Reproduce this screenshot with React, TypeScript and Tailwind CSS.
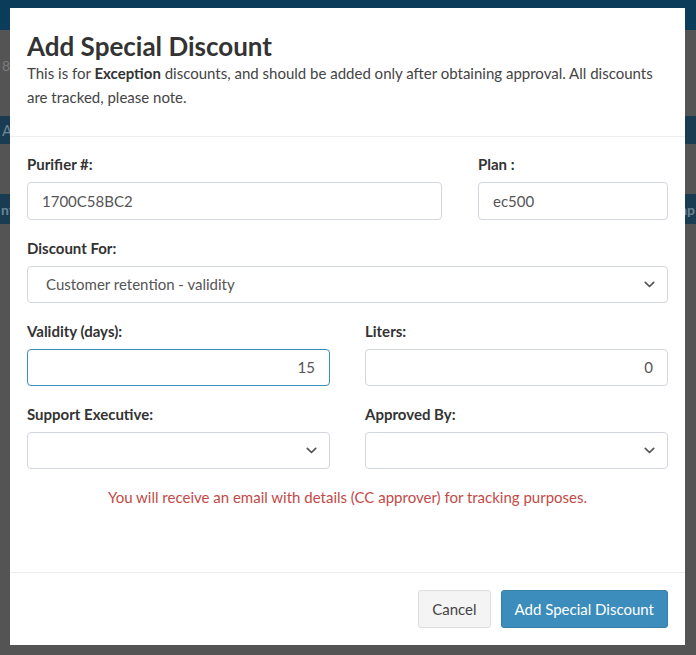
import React from "react";

const font = { fontFamily: "Lato, 'Liberation Sans', sans-serif" };

function Chevron() {
  return (
    <svg width="11" height="7" viewBox="0 0 11 7" fill="none" className="shrink-0">
      <path d="M1.3 1.3 5.5 5.5l4.2-4.2" stroke="#555" strokeWidth="1.7" strokeLinecap="round" strokeLinejoin="round" />
    </svg>
  );
}

function Label({ children }: { children: React.ReactNode }) {
  return <div className="text-[15px] leading-[20px] font-bold text-[#333] mb-2">{children}</div>;
}

function TextBox({ value, right, focus, tall }: { value: string; right?: boolean; focus?: boolean; tall?: boolean }) {
  return (
    <div
      className={`${tall ? "h-[38px]" : "h-[37px]"} rounded-[4px] border flex items-center px-[14px] text-[15px] text-[#555] ${
        focus ? "border-[#3c8dbc]" : "border-[#d2d6de]"
      } ${right ? "justify-end" : ""}`}
    >
      {value}
    </div>
  );
}

function SelectBox({ value }: { value?: string }) {
  return (
    <div className="h-[37px] rounded-[4px] border border-[#d2d6de] flex items-center justify-between pl-[18px] pr-[12px] text-[15px] text-[#555]">
      <span>{value}</span>
      <Chevron />
    </div>
  );
}

export default function App() {
  return (
    <div className="relative w-[696px] h-[655px] overflow-hidden bg-[#545454]" style={font}>
      {/* page behind the backdrop */}
      <div className="h-[30px] bg-[#0b3c5a]" />
      <div className="pt-[25px] pl-[2px] text-[14px] text-[#7c7c7c]">8B</div>
      <div className="mt-[40px] h-[28px] bg-[#1a3c52] flex items-center px-[2px] text-[15px] text-[#6c8494]">Ac</div>
      <div className="mt-[50px] h-[30px] bg-[#1a3c52] flex items-center justify-between px-[1px] text-[14px] font-bold text-[#6c8494]">
        <span>nt</span>
        <span>np</span>
      </div>

      {/* modal */}
      <div className="absolute left-[10px] top-[8px] w-[675px] h-[637px] bg-white flex flex-col">
        <div className="px-[17px] pt-[23px] pb-[27px] border-b border-[#eeeeee]">
          <h2 className="text-[26px] leading-[30px] font-bold text-[#333]">Add Special Discount</h2>
          <p className="text-[15px] leading-[24px] text-[#444]">
            This is for <span className="font-bold text-[#333]">Exception</span> discounts, and should be added only after obtaining approval. All discounts are tracked, please note.
          </p>
        </div>

        <div className="flex-1 px-[17px] pt-[17px]">
          <div className="grid grid-cols-[415px_1fr] gap-x-[36px]">
            <div>
              <Label>Purifier #:</Label>
              <TextBox value="1700C58BC2" tall />
            </div>
            <div>
              <Label>Plan :</Label>
              <TextBox value="ec500" tall />
            </div>
          </div>

          <div className="mt-[18px]">
            <Label>Discount For:</Label>
            <SelectBox value="Customer retention - validity" />
          </div>

          <div className="mt-[18px] grid grid-cols-2 gap-x-[35px]">
            <div>
              <Label>Validity (days):</Label>
              <TextBox value="15" right focus />
            </div>
            <div>
              <Label>Liters:</Label>
              <TextBox value="0" right />
            </div>
          </div>

          <div className="mt-[18px] grid grid-cols-2 gap-x-[35px]">
            <div>
              <Label>Support Executive:</Label>
              <SelectBox />
            </div>
            <div>
              <Label>Approved By:</Label>
              <SelectBox />
            </div>
          </div>

          <p className="mt-[18px] text-center text-[15px] leading-[20px] text-[#c24a47]">
            You will receive an email with details (CC approver) for tracking purposes.
          </p>
        </div>

        <div className="border-t border-[#eeeeee] px-[17px] py-[17px] flex justify-end gap-[10px]">
          <button className="h-[38px] px-[13px] rounded-[3px] border border-[#dddddd] bg-[#f4f4f4] text-[15px] text-[#444]">
            Cancel
          </button>
          <button className="h-[38px] px-[13px] rounded-[3px] border border-[#367fa9] bg-[#3c8dbc] text-[15px] text-white">
            Add Special Discount
          </button>
        </div>
      </div>
    </div>
  );
}
